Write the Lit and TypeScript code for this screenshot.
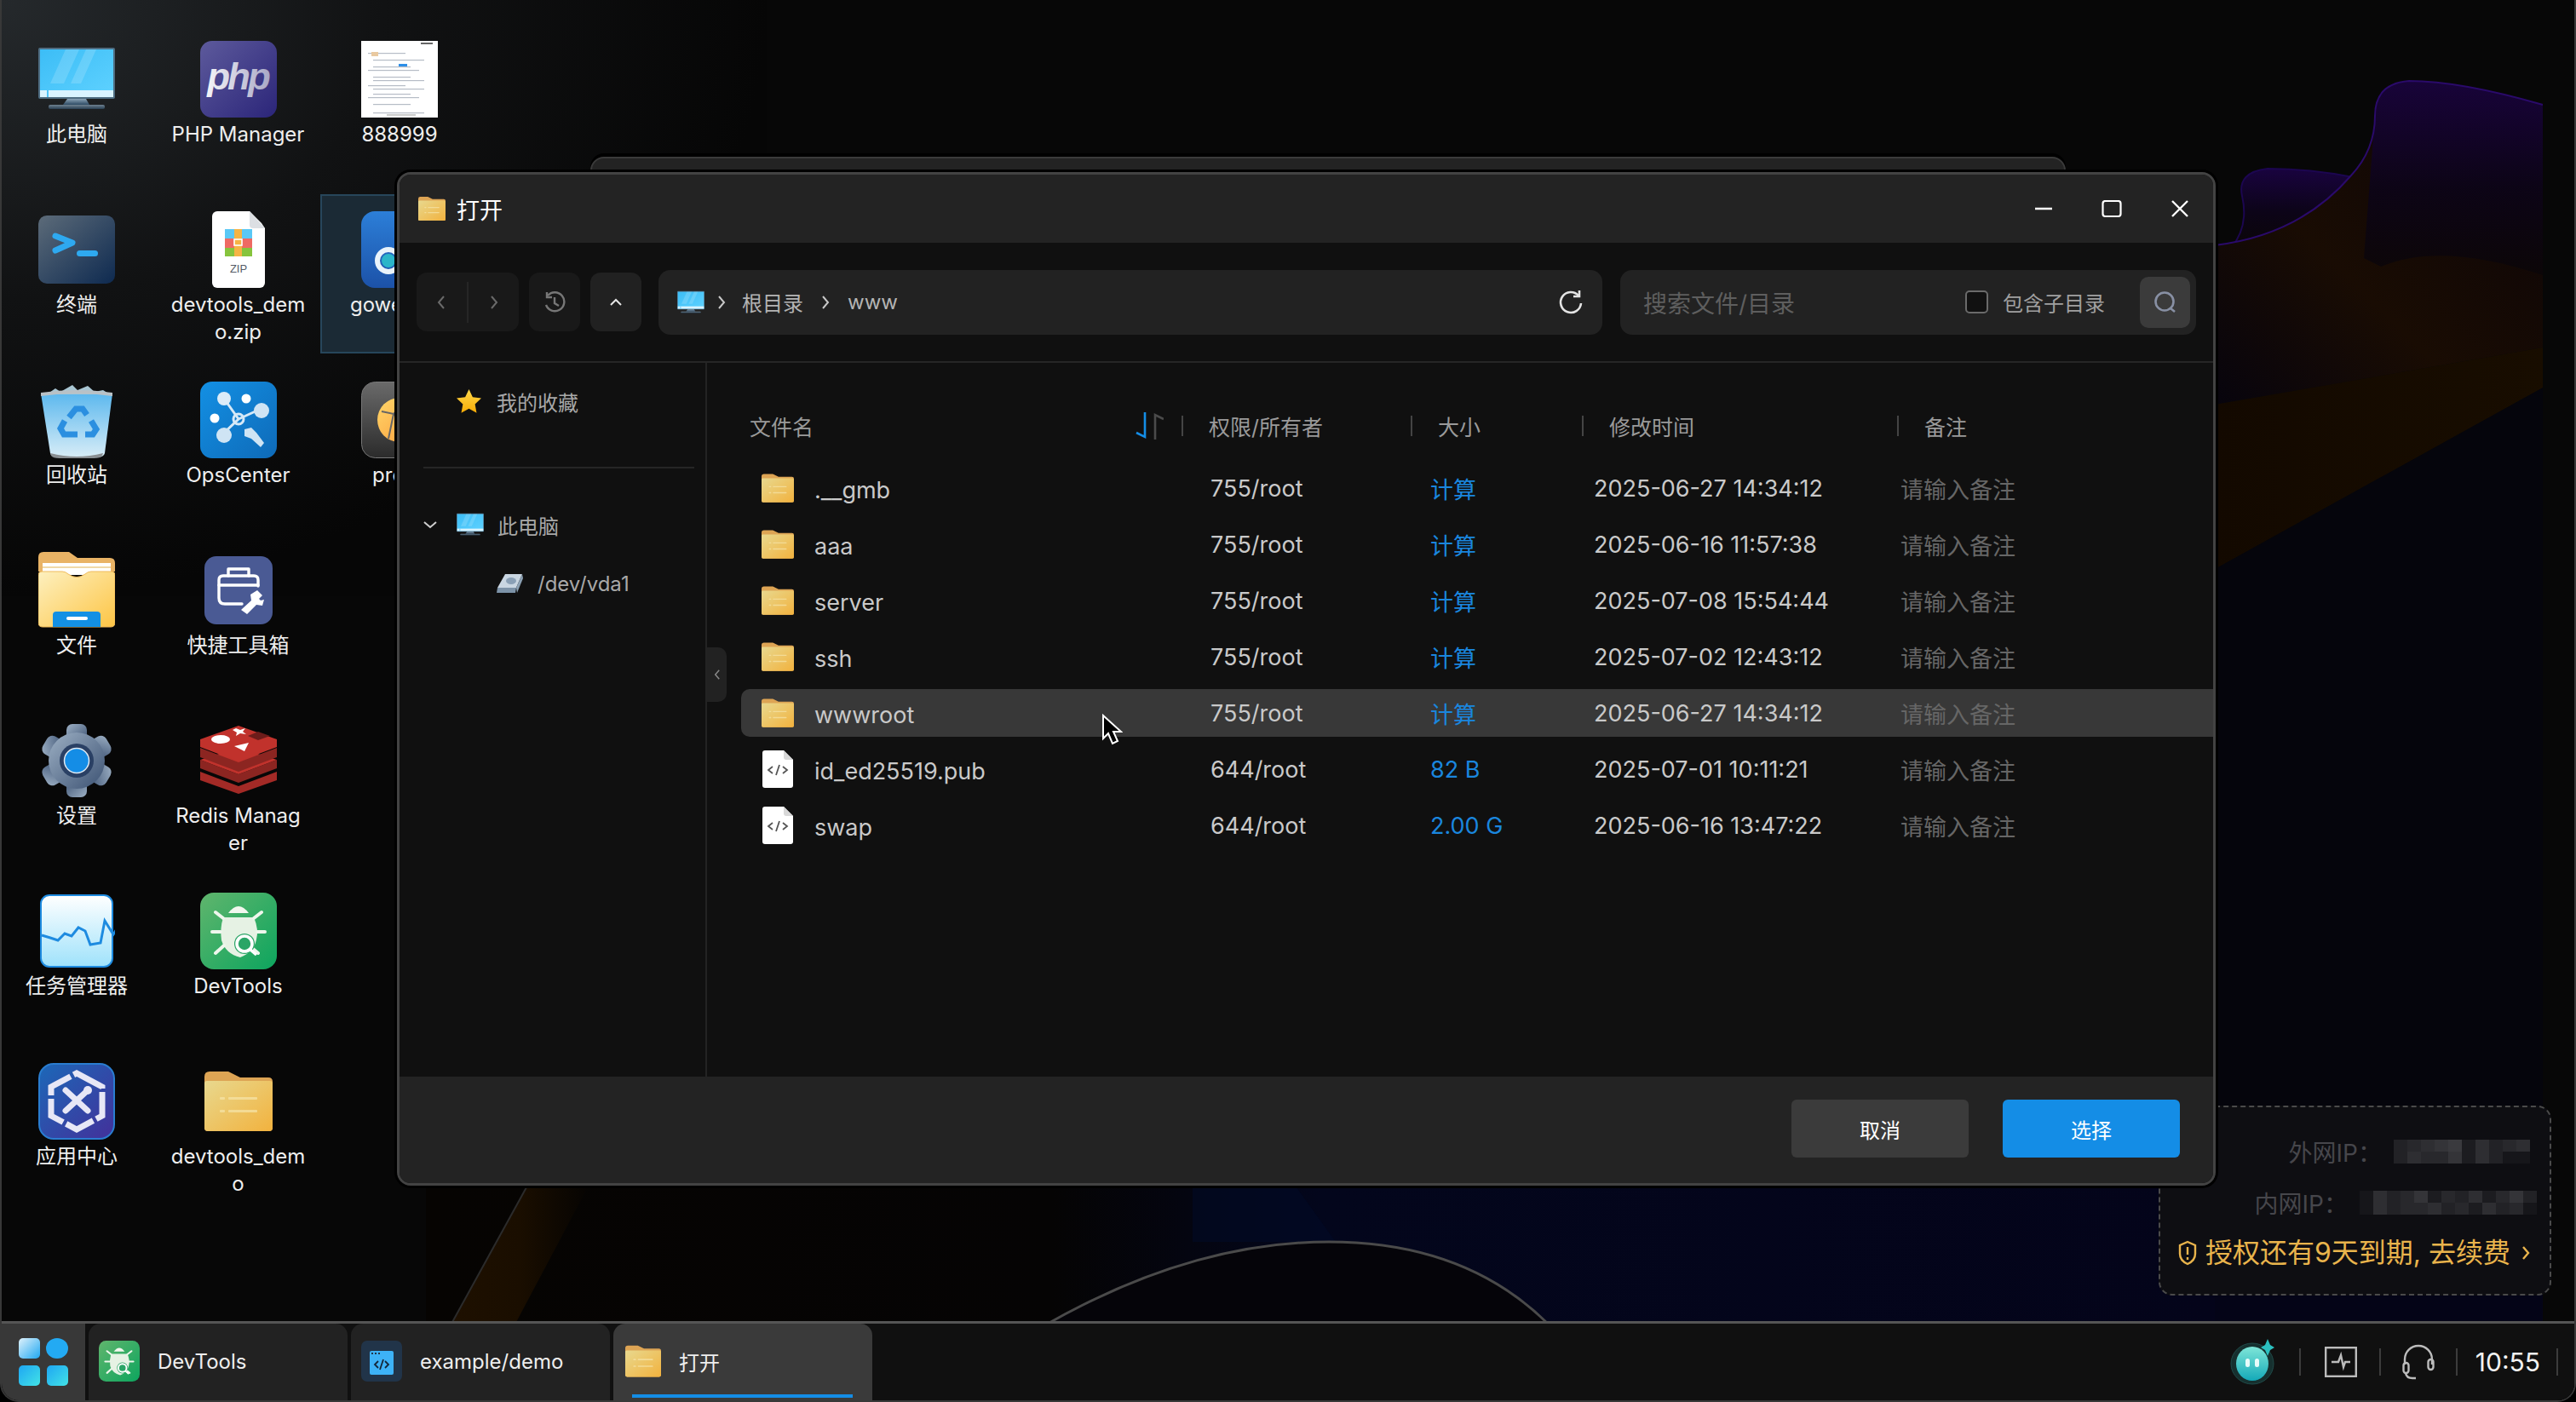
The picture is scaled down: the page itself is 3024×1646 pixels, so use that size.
import { LitElement, css, html, svg } from 'lit'
import { customElement } from 'lit/decorators.js'

// shared gradients live in the wallpaper svg, every icon points at them
const defs = svg`
  <defs>
    <linearGradient id="wpPurple" x1="0" y1="0" x2="0" y2="1"><stop offset="0" stop-color="#19033f"/><stop offset=".55" stop-color="#0c0418"/><stop offset="1" stop-color="#0b0608"/></linearGradient>
    <linearGradient id="wpOrange" x1="0" y1="0" x2="1" y2="0"><stop offset="0" stop-color="#130900"/><stop offset="1" stop-color="#180d00"/></linearGradient>
    <linearGradient id="wpFold" x1="1" y1="0" x2="0" y2="1"><stop offset="0" stop-color="#0b0408"/><stop offset=".6" stop-color="#190c03"/><stop offset="1" stop-color="#07040d"/></linearGradient>
    <linearGradient id="wpBand" x1="0" y1="0" x2="1" y2="0"><stop offset="0" stop-color="#1e1000"/><stop offset=".5" stop-color="#1a0e00"/><stop offset="1" stop-color="#060402"/></linearGradient>
    <linearGradient id="wpFloor" x1="0" y1="0" x2="1" y2="0"><stop offset="0" stop-color="#060402"/><stop offset=".35" stop-color="#050404"/><stop offset=".5" stop-color="#03061c"/><stop offset="1" stop-color="#04041a"/></linearGradient>
    <radialGradient id="wpCorner" cx="0" cy="0" r="1"><stop offset="0" stop-color="#25292c"/><stop offset=".5" stop-color="#111213"/><stop offset="1" stop-color="#060606"/></radialGradient>
    <linearGradient id="gPhp" x1="0" y1="0" x2="1" y2="1"><stop offset="0" stop-color="#5d5a9c"/><stop offset="1" stop-color="#2b2579"/></linearGradient>
    <linearGradient id="gPhpT" x1="0" y1="0" x2="1" y2="0"><stop offset="0" stop-color="#f4f4f8"/><stop offset="1" stop-color="#a9a8c6"/></linearGradient>
    <linearGradient id="gScreen" x1="0" y1="0" x2="1" y2="1"><stop offset="0" stop-color="#3cbdf6"/><stop offset="1" stop-color="#5fd2ff"/></linearGradient>
    <linearGradient id="gStand" x1="0" y1="0" x2="0" y2="1"><stop offset="0" stop-color="#8ba3b6"/><stop offset="1" stop-color="#2d4a63"/></linearGradient>
    <linearGradient id="gTerm" x1="0" y1="0" x2="1" y2="1"><stop offset="0" stop-color="#5c6b79"/><stop offset="1" stop-color="#0e2a50"/></linearGradient>
    <linearGradient id="gGowe" x1="0" y1="0" x2="0" y2="1"><stop offset="0" stop-color="#2c7fd8"/><stop offset="1" stop-color="#1c52a8"/></linearGradient>
    <linearGradient id="gPro" x1="0" y1="0" x2="0" y2="1"><stop offset="0" stop-color="#6a6a6a"/><stop offset="1" stop-color="#2b2b2b"/></linearGradient>
    <linearGradient id="gOrange" x1="0" y1="0" x2="1" y2="1"><stop offset="0" stop-color="#ffd76a"/><stop offset="1" stop-color="#fb9a3a"/></linearGradient>
    <linearGradient id="gBin" x1="0" y1="0" x2="0" y2="1"><stop offset="0" stop-color="#5cb8ee"/><stop offset="1" stop-color="#d8edf7"/></linearGradient>
    <linearGradient id="gOps" x1="0" y1="0" x2="1" y2="1"><stop offset="0" stop-color="#1390e4"/><stop offset="1" stop-color="#0e6ab8"/></linearGradient>
    <linearGradient id="gOpen" x1="0" y1="0" x2="1" y2="1"><stop offset="0" stop-color="#fdf0bf"/><stop offset="1" stop-color="#fdc545"/></linearGradient>
    <linearGradient id="gGear" x1="0" y1="0" x2="1" y2="1"><stop offset="0" stop-color="#9db0c4"/><stop offset="1" stop-color="#3c5273"/></linearGradient>
    <linearGradient id="gTask" x1="0" y1="0" x2="0" y2="1"><stop offset="0" stop-color="#ffffff"/><stop offset="1" stop-color="#9fe2fb"/></linearGradient>
    <linearGradient id="gDev" x1="0" y1="0" x2="1" y2="1"><stop offset="0" stop-color="#60b56d"/><stop offset="1" stop-color="#0da55e"/></linearGradient>
    <linearGradient id="gApp" x1="0" y1="0" x2="1" y2="1"><stop offset="0" stop-color="#1c68b8"/><stop offset="1" stop-color="#43309a"/></linearGradient>
    <linearGradient id="gFolder" x1="0" y1="0" x2="1" y2="1"><stop offset="0" stop-color="#e8d88e"/><stop offset="1" stop-color="#f2b23e"/></linearGradient>
    <linearGradient id="gStart" x1="0" y1="0" x2="1" y2="1"><stop offset="0" stop-color="#dff1fb"/><stop offset="1" stop-color="#1fa8f2"/></linearGradient>
    <linearGradient id="gStart2" x1="0" y1="0" x2="1" y2="1"><stop offset="0" stop-color="#1ea6f3"/><stop offset="1" stop-color="#42e3e6"/></linearGradient>
    <linearGradient id="gBot" x1="0" y1="0" x2="0" y2="1"><stop offset="0" stop-color="#7fe6d8"/><stop offset="1" stop-color="#14a9b8"/></linearGradient>
    <linearGradient id="gStar" x1="0" y1="0" x2="0" y2="1"><stop offset="0" stop-color="#ffd84a"/><stop offset="1" stop-color="#f7ab05"/></linearGradient>
  </defs>
`

const monitor = svg`
  <rect x="0" y="8" width="90" height="60" rx="2" fill="#4f6d82"/>
  <rect x="2" y="10" width="86" height="56" fill="url(#gScreen)"/>
  <path d="M32 10h16L30 50H14zM56 10h12L50 50H38z" fill="#fff" opacity=".16"/>
  <rect x="2" y="58" width="86" height="8" fill="#d9f3ff"/><rect x="10" y="58" width="2" height="8" fill="#4fc3f7"/>
  <path d="M34 68h22l4 7H29z" fill="url(#gStand)"/>
  <rect x="12" y="75" width="66" height="5" rx="2" fill="url(#gStand)" opacity=".75"/>
`
const phpIcon = svg`
  <rect width="90" height="90" rx="14" fill="url(#gPhp)"/>
  <text x="44" y="57" text-anchor="middle" font-family="Liberation Sans" font-size="44" font-weight="700" font-style="italic" letter-spacing="-3" fill="url(#gPhpT)">php</text>
`
const thumbLines = [14, 22, 30, 34, 42, 46, 52, 56, 62, 66, 74, 84]
const thumb = svg`
  <rect width="90" height="90" fill="#fff"/>
  ${thumbLines.map((y, i) => svg`<rect x=${i % 3 === 0 ? 8 : 14} y=${y} width=${i % 2 ? 60 : 44} height="1.2" fill="#b6bcc6"/>`)}
  <rect x="44" y="27" width="10" height="3" fill="#2d8fe8"/><rect x="70" y="2" width="14" height="2" fill="#666"/><rect x="12" y="13" width="8" height="5" fill="#e9c9a0"/>
  <rect x="30" y="86" width="34" height="2" fill="#ccc"/>
`
const terminal = svg`
  <rect x="0" y="0" width="90" height="80" rx="10" transform="translate(0 5)" fill="url(#gTerm)"/>
  <path d="M20 29l20 8-20 9" fill="none" stroke="#2ea9f0" stroke-width="7" stroke-linecap="round" stroke-linejoin="round"/>
  <rect x="45" y="46" width="25" height="7" rx="3.5" fill="#2ea9f0"/>
`
const zip = svg`
  <path d="M20 0h38l14 14 4 6v64a6 6 0 0 1-6 6H20a6 6 0 0 1-6-6V6a6 6 0 0 1 6-6z" fill="#fff"/>
  <path d="M58 0l18 20H62a4 4 0 0 1-4-4z" fill="#dcdfe3"/>
  <rect x="29" y="21" width="32" height="11" fill="#5ac8f5"/><rect x="29" y="32" width="32" height="11" fill="#ee6a63"/><rect x="29" y="43" width="32" height="10" fill="#86c43d"/>
  <rect x="40" y="21" width="9" height="32" fill="#f5b445"/><rect x="40" y="33" width="9" height="7" fill="none" stroke="#fff" stroke-width="1.6"/>
  <text x="45" y="72" text-anchor="middle" font-family="Liberation Sans" font-size="13" fill="#555b66">ZIP</text>
`
const gowe = svg`
  <rect width="90" height="90" rx="16" fill="url(#gGowe)"/>
  <path d="M58 18a9 9 0 1 1 0 18l-14 14" fill="none" stroke="#45c9cf" stroke-width="8"/>
  <circle cx="32" cy="58" r="13" fill="none" stroke="#e9f3fb" stroke-width="6"/><circle cx="32" cy="58" r="8" fill="#2bb5c9"/>
`
const pro = svg`
  <rect x=".5" y=".5" width="89" height="89" rx="16" fill="url(#gPro)" stroke="#777"/>
  <circle cx="45" cy="45" r="26" fill="url(#gOrange)"/>
  <path d="M24 35l14 3 16-16M38 38l-6 29M38 38l28 14" fill="none" stroke="#666" stroke-width="2"/>
`
const recycle = svg`
  <path d="M3 14h84l-9 70q-1 5-10 5H24q-9 0-10-5z" fill="url(#gBin)"/>
  <path d="M10 15l10-7 6 4 14-8 6 6 12-5 8 7 10-2 8 5z" fill="#a9c6d3"/>
  <path d="M3 13q42-6 84 0v4q-42-6-84 0z" fill="#b9c1c6"/>
  <path d="M14 84q31 8 62 0l-1 3q-2 3-10 3H25q-8 0-10-3z" fill="#8a8f93"/>
  <g fill="none" stroke="#2b8fe0" stroke-width="7">
    <path d="M36 42l8-10h8l5 7"/><path d="M62 46l6 10-4 6h-9"/><path d="M46 62H30l-4-7 5-9"/>
  </g>
`
const ops = svg`
  <rect width="90" height="90" rx="14" fill="url(#gOps)"/>
  <g stroke="#d6e9f7" stroke-width="3" fill="none"><path d="M28 20l17 24-19 18M45 44l24-11"/><circle cx="45" cy="44" r="6"/></g>
  <circle cx="28" cy="20" r="8" fill="#dcecf8"/><circle cx="54" cy="20" r="5.5" fill="#fff"/><circle cx="17" cy="43" r="5.5" fill="#fff"/>
  <circle cx="72" cy="34" r="9" fill="#cfe4f4"/><circle cx="28" cy="63" r="9" fill="#cfe4f4"/>
  <path d="M52 56l8-2 6 6 9 12-4 5-11-10-8-3z" fill="#cfe4f4"/>
`
const openFolder = svg`
  <path d="M0 6q0-6 6-6h30l10 7h38q6 0 6 6v10H0z" fill="#e9b365"/>
  <rect x="5" y="13" width="80" height="14" fill="#fff"/><rect x="5" y="17" width="80" height="2" fill="#f0d9a8"/>
  <path d="M0 27q0-4 4-4h24q4 0 7 3 10 7 20 0 3-3 7-3h24q4 0 4 4v56q0 5-5 5H5q-5 0-5-5z" fill="url(#gOpen)" stroke="#f0bb5a"/>
  <path d="M17 88V74q0-4 4-4h48q4 0 4 4v14z" fill="#1390e4"/><rect x="33" y="76" width="25" height="4" rx="2" fill="#fff"/>
`
const toolbox = svg`
  <rect width="80" height="80" rx="14" fill="#4a5a94"/>
  <g fill="none" stroke="#fff" stroke-width="3.4" stroke-linejoin="round" stroke-linecap="round">
    <path d="M28 23v-8h24v8"/><path d="M44 56H24q-7 0-7-7V28q0-5 5-5h36q5 0 5 5v7"/><path d="M17 34h46"/>
  </g>
  <path d="M62 40l6 6-4 4 2 2 4-1-2 7-7-1-11 11-7-5 12-11-1-7z" fill="#fff"/>
`
const gear = svg`
  <g fill="url(#gGear)">
    ${[0, 60, 120, 180, 240, 300].map((a) => svg`<rect x="33" y="2" width="24" height="22" rx="7" transform="rotate(${a} 45 45)"/>`)}
    <circle cx="45" cy="45" r="33"/>
  </g>
  <circle cx="45" cy="45" r="20" fill="#2a4064"/><circle cx="45" cy="45" r="14.5" fill="#148de6" stroke="#dfe9f2" stroke-width="1.5"/>
`
const redis = svg`
  <path d="M0 58l45 17 45-17v10L45 84 0 68z" fill="#a32a26"/><path d="M0 44l45 17 45-17v10L45 71 0 54z" fill="#8c2521"/>
  <path d="M0 44l45-14 45 14-45 17z" fill="#c1322c"/><path d="M0 30l45 17 45-17v11L45 58 0 41z" fill="#8c2521"/>
  <path d="M0 20L45 4l45 16v9L45 46 0 29z" fill="#c1322c"/>
  <ellipse cx="24" cy="20" rx="11" ry="5" fill="#fff"/><path d="M42 7l5 2 6-2-3 4 4 3-7-1-5 3 1-4-5-3z" fill="#fff"/><path d="M40 28l17-4-5 10z" fill="#fff"/>
  <path d="M56 16l12-5 14 5-14 5z" fill="#6d1c1a"/>
`
const taskMgr = svg`
  <rect x="3" y="3" width="84" height="84" rx="10" fill="url(#gTask)" stroke="#1e8be0" stroke-width="2"/>
  <path d="M4 50l10 3 9 3 8-8 8 3 8-10 8 4 6 16 12-2 5-26 10 16 4-6 3 6h4" fill="none" stroke="#1e8be0" stroke-width="3"/>
`
const devtools = svg`
  <rect width="90" height="90" rx="16" fill="url(#gDev)"/>
  <path d="M33 24q12-16 24 0z" fill="#f2f7ee"/>
  <path d="M27 29h36q6 14 3 26-3 15-19 21-17-4-22-20-2-14 2-27z" fill="#e6f2e4"/>
  <g fill="none" stroke="#eef6ec" stroke-width="4" stroke-linecap="round"><path d="M27 30L18 23M63 30l9-7M24 46H14M67 46h9M28 62l-10 9M62 66l6 5"/></g>
  <circle cx="52" cy="60" r="12" fill="#2aa566"/><circle cx="52" cy="60" r="9" fill="none" stroke="#fff" stroke-width="3.6"/><path d="M59 67l7 6" stroke="#fff" stroke-width="3.6"/>
`
const appCenter = svg`
  <rect x="1" y="1" width="88" height="88" rx="17" fill="url(#gApp)" stroke="#2a7dd0" stroke-width="2"/>
  <path d="M45 12l30 16v34L45 78 15 62V28z" fill="none" stroke="#e7e7f6" stroke-width="7" stroke-dasharray="36 4"/>
  <path d="M32 32l26 24M58 32L32 56" stroke="#e7e7f6" stroke-width="7" stroke-linecap="round"/>
  <circle cx="58" cy="32" r="5" fill="#e7e7f6"/>
`
const folder = svg`
  <path d="M0 6q0-6 6-6h22l14 7h33q5 0 5 5v54q0 4-4 4H4q-4 0-4-4z" fill="#dda454"/>
  <path d="M0 14q0-3 3-3h74q3 0 3 3v52q0 4-4 4H4q-4 0-4-4z" fill="url(#gFolder)"/>
  <g fill="#f6e3a6" opacity=".75"><rect x="18" y="30" width="6" height="3" rx="1"/><rect x="28" y="30" width="34" height="3" rx="1"/><rect x="18" y="45" width="6" height="3" rx="1"/><rect x="28" y="45" width="34" height="3" rx="1"/></g>
`
const codeFile = svg`
  <path d="M3 0h22l11 11v30a3 3 0 0 1-3 3H3a3 3 0 0 1-3-3V3a3 3 0 0 1 3-3z" fill="#fff"/>
  <path d="M25 0l11 11h-8a3 3 0 0 1-3-3z" fill="#d8d8d8"/>
  <path d="M12 19l-5 4 5 4M24 19l5 4-5 4M20 17l-4 12" fill="none" stroke="#555" stroke-width="1.8"/>
`
const codeApp = svg`
  <rect width="48" height="48" rx="7" fill="#213449"/>
  <rect x="10" y="12" width="28" height="28" rx="2" fill="#3db2f7"/>
  <g fill="#213449"><rect x="12" y="14" width="2" height="2"/><rect x="16" y="14" width="2" height="2"/><rect x="20" y="14" width="2" height="2"/></g>
  <path d="M20 24l-4 4 4 4M28 24l4 4-4 4M26 22l-4 12" fill="none" stroke="#14273a" stroke-width="1.8"/>
`

const icon = (art: unknown, w: number, h: number, vw = w, vh = h) =>
  html`<svg width=${w} height=${h} viewBox="0 0 ${vw} ${vh}" style="flex:none;display:block">${art}</svg>`

const chevron = (d: string, color: string, size = 16, width = 2) => html`
  <svg width=${size} height=${size} viewBox="0 0 16 16" style="flex:none;display:block">
    <path d=${d} fill="none" stroke=${color} stroke-width=${width}/>
  </svg>`

const RIGHT = 'M5 1l6 7-6 7'
const LEFT = 'M11 1L5 8l6 7'
const DOWN = 'M1 5l7 6 7-6'
const UP = 'M2 11l6-6 6 6'

interface DeskItem { name: string; art: unknown; sel?: boolean; w?: number; vw?: number; vh?: number; h?: number }

const desktop: DeskItem[] = [
  { name: '此电脑', art: monitor },
  { name: '终端', art: terminal },
  { name: '回收站', art: recycle },
  { name: '文件', art: openFolder },
  { name: '设置', art: gear },
  { name: '任务管理器', art: taskMgr },
  { name: '应用中心', art: appCenter },
  { name: 'PHP Manager', art: phpIcon },
  { name: 'devtools_demo.zip', art: zip },
  { name: 'OpsCenter', art: ops },
  { name: '快捷工具箱', art: toolbox, w: 80, h: 80, vw: 80, vh: 80 },
  { name: 'Redis Manager', art: redis },
  { name: 'DevTools', art: devtools },
  { name: 'devtools_demo', art: folder, w: 80, h: 70, vw: 80, vh: 70 },
  { name: '888999', art: thumb },
  { name: 'gowebssh', art: gowe, sel: true },
  { name: 'proxy', art: pro },
]

const rows = [
  { name: '.__gmb', dir: true, perm: '755/root', size: '计算', time: '2025-06-27 14:34:12' },
  { name: 'aaa', dir: true, perm: '755/root', size: '计算', time: '2025-06-16 11:57:38' },
  { name: 'server', dir: true, perm: '755/root', size: '计算', time: '2025-07-08 15:54:44' },
  { name: 'ssh', dir: true, perm: '755/root', size: '计算', time: '2025-07-02 12:43:12' },
  { name: 'wwwroot', dir: true, perm: '755/root', size: '计算', time: '2025-06-27 14:34:12', hover: true },
  { name: 'id_ed25519.pub', dir: false, perm: '644/root', size: '82 B', time: '2025-07-01 10:11:21' },
  { name: 'swap', dir: false, perm: '644/root', size: '2.00 G', time: '2025-06-16 13:47:22' },
]

// the blurred out ip addresses, one shade per mosaic cell
const mosaicA = [3, 4, 5, 6, 7, 2, 5, 3, 4, 5, 3, 5, 4, 4, 6, 2, 5, 3, 1, 1]
const mosaicB = [1, 5, 3, 4, 6, 2, 4, 3, 5, 2, 4, 6, 3, 1, 5, 3, 4, 4, 5, 3, 4, 2, 5, 3, 4, 1]

const mosaic = (cells: number[], perRow: number) => html`
  <span class="mosaic" style="grid-template-columns:repeat(${perRow},16px)">
    ${cells.map((c) => html`<i style="background:rgb(${16 + c * 6},${16 + c * 6},${20 + c * 6})"></i>`)}
  </span>`

@customElement('app-root')
export class AppRoot extends LitElement {
  static styles = css`
    :host {
      display: block;
      width: 3024px;
      height: 1646px;
      overflow: hidden;
      background: #000;
      font-family: Inter, "Noto Sans CJK SC", sans-serif;
    }
    .screen {
      position: relative;
      box-sizing: border-box;
      width: 3024px;
      height: 1646px;
      display: flex;
      flex-direction: column;
      overflow: hidden;
      background: #070707;
      border: 2px solid #383838;
      border-top: 0;
      border-radius: 0 0 22px 22px;
    }
    .wall { position: absolute; left: -2px; top: 0; }

    /* desktop icons */
    .desk {
      position: relative;
      flex: 1;
      display: grid;
      grid-auto-flow: column;
      grid-template-rows: repeat(7, 200px);
      grid-template-columns: repeat(3, 160px);
      column-gap: 29.5px;
      align-content: start;
      padding: 48px 0 0 8px;
    }
    .cell {
      position: relative;
      display: flex;
      flex-direction: column;
      align-items: center;
      isolation: isolate;
    }
    .cell.sel::before {
      content: "";
      position: absolute;
      z-index: -1;
      left: -13px;
      right: -13px;
      top: -20px;
      height: 187px;
      box-sizing: border-box;
      background: #1b2a35;
      border: 2px solid #27465b;
    }
    .art { height: 90px; display: flex; align-items: center; justify-content: center; }
    .label {
      margin-top: 4px;
      width: 160px;
      text-align: center;
      font-size: 24px;
      line-height: 32px;
      color: #eee;
      word-break: break-all;
    }

    /* free widget on the desktop */
    .info {
      position: absolute;
      left: 2532px;
      top: 1298px;
      width: 461px;
      height: 223px;
      box-sizing: border-box;
      background: #0e0e12;
      border: 2px dashed #4a4a4a;
      border-radius: 16px;
      font-size: 28px;
      color: #46464b;
    }
    .ip { position: absolute; display: flex; align-items: center; gap: 14px; white-space: nowrap; }
    .ip.a { right: 23px; top: 32px; }
    .ip.b { right: 15px; top: 92px; }
    .mosaic { display: grid; grid-auto-rows: 14px; }
    .mosaic i { display: block; height: 14px; }
    .warn {
      position: absolute;
      left: 21px;
      top: 151px;
      display: flex;
      align-items: center;
      gap: 10px;
      white-space: nowrap;
      font-size: 32px;
      line-height: 40px;
      color: #e9b44c;
    }

    /* windows */
    .back {
      position: absolute;
      left: 691px;
      top: 184px;
      width: 1728px;
      height: 40px;
      background: #232323;
      border: 2px solid #3a3a3a;
      border-radius: 16px 16px 0 0;
      box-shadow: 0 -4px 0 #000;
    }
    .win {
      position: absolute;
      left: 464px;
      top: 202px;
      width: 2135px;
      height: 1190px;
      box-sizing: border-box;
      display: flex;
      flex-direction: column;
      overflow: hidden;
      background: #101010;
      border: 3px solid #434343;
      border-radius: 16px;
      box-shadow: 0 0 0 3px #000;
    }
    .title {
      flex: none;
      height: 80px;
      display: flex;
      align-items: center;
      gap: 13px;
      padding: 0 19px 0 22px;
      background: #232323;
      color: #fff;
      font-size: 27px;
    }
    .controls { margin-left: auto; display: flex; gap: 40px; }
    .controls button {
      width: 40px;
      height: 40px;
      padding: 0;
      border: 0;
      background: none;
      display: flex;
      align-items: center;
      justify-content: center;
    }
    .tools {
      flex: none;
      box-sizing: border-box;
      height: 141px;
      display: flex;
      align-items: center;
      padding: 0 20px;
      border-bottom: 2px solid #262626;
    }
    .btn {
      flex: none;
      height: 69px;
      width: 60px;
      margin-right: 12px;
      border-radius: 12px;
      background: #191919;
      display: flex;
      align-items: center;
      justify-content: center;
    }
    .btn.nav { width: 120px; }
    .btn.nav b { width: 2px; height: 48px; margin: 0 22px; background: #262626; }
    .btn.up { background: #212121; margin-right: 20px; }
    .crumb {
      flex: 1;
      height: 76px;
      display: flex;
      align-items: center;
      padding: 0 22px;
      border-radius: 14px;
      background: #222;
      font-size: 24px;
      color: #b4b4b4;
    }
    .crumb .sp { margin-left: auto; }
    .search {
      flex: none;
      box-sizing: border-box;
      width: 676px;
      height: 76px;
      margin-left: 21px;
      padding: 0 7px 0 27px;
      display: flex;
      align-items: center;
      border-radius: 14px;
      background: #222;
    }
    .search .ph { font-size: 28px; color: #5e5e5e; }
    .check {
      margin-left: auto;
      width: 27px;
      height: 27px;
      box-sizing: border-box;
      border: 2px solid #6a6a6a;
      border-radius: 5px;
      background: #111;
    }
    .search .lbl { margin-left: 17px; font-size: 24px; color: #a0a0a0; }
    .go {
      margin-left: 41px;
      width: 59px;
      height: 60px;
      border-radius: 10px;
      background: #3b3b3b;
      display: flex;
      align-items: center;
      justify-content: center;
    }

    .body { flex: 1; display: flex; min-height: 0; }
    .side {
      flex: none;
      width: 359px;
      box-sizing: content-box;
      padding-top: 20px;
      border-right: 2px solid #232323;
      font-size: 24px;
      color: #a8a8a8;
    }
    .tree { height: 50px; display: flex; align-items: center; }
    .tree.fav { padding-left: 67px; gap: 18px; }
    .tree.pc { margin-top: 41px; padding-left: 28px; }
    .tree.pc .pcicon { margin: 0 16px 0 23px; }
    .tree.disk { margin-top: 19px; padding-left: 114px; gap: 16px; }
    .rule { height: 2px; margin: 52px 13px 0 28px; background: #262626; }

    .main { position: relative; flex: 1; min-width: 0; }
    .handle {
      position: absolute;
      left: 0;
      top: 334px;
      width: 23px;
      height: 64px;
      border-radius: 0 10px 10px 0;
      background: #222;
      display: flex;
      align-items: center;
      justify-content: center;
    }
    .head {
      display: grid;
      grid-template-columns: 507px 269px 201px 370px 1fr;
      height: 48px;
      margin: 50px 0 21px 50px;
      font-size: 25px;
      color: #9a9a9a;
    }
    .head > div { display: flex; align-items: center; }
    .head .sepd::before {
      content: "";
      width: 2px;
      height: 24px;
      margin-right: 30px;
      background: #444;
    }
    .head .first { justify-content: space-between; padding-right: 21px; }
    .list { display: flex; flex-direction: column; gap: 10px; margin-left: 40px; }
    .row {
      height: 56px;
      display: grid;
      grid-template-columns: 527px 258px 192px 360px 1fr;
      align-items: center;
      padding-left: 24px;
      border-radius: 10px 0 0 10px;
      font-size: 27px;
      color: #c9c9c9;
    }
    .row.hover { background: #383838; }
    .name { display: flex; align-items: center; gap: 24px; }
    .name .txt { padding-top: 5px; }
    .name .ico { width: 38px; display: flex; justify-content: center; }
    .link { color: #1a86de; }
    .note { color: #666; }
    .pointer { position: absolute; left: 1290px; top: 838px; z-index: 3; }

    .foot {
      flex: none;
      height: 125px;
      box-sizing: border-box;
      display: flex;
      justify-content: flex-end;
      gap: 40px;
      padding: 27px 39px 0 0;
      background: #232323;
    }
    .foot button {
      width: 208px;
      height: 68px;
      border: 0;
      border-radius: 6px;
      font: inherit;
      font-size: 24px;
      color: #fff;
      background: #3b3b3b;
    }
    .foot button.ok { background: #148de6; }

    /* taskbar */
    .bar {
      position: relative;
      flex: none;
      height: 90px;
      display: flex;
      border-top: 3px solid #555;
      background: #101010;
      font-size: 24px;
      color: #eee;
    }
    .start {
      flex: none;
      width: 98px;
      background: #383838;
      display: flex;
      align-items: center;
      justify-content: center;
    }
    .task {
      flex: none;
      position: relative;
      box-sizing: border-box;
      width: 304px;
      margin-left: 4px;
      display: flex;
      align-items: center;
      gap: 21px;
      padding: 0 0 2px 12px;
      border-radius: 14px 14px 0 0;
      background: #222;
    }
    .task.on { background: #3a3a3a; padding-left: 14px; }
    .task.on::after {
      content: "";
      position: absolute;
      left: 22px;
      width: 259px;
      bottom: 3px;
      height: 4px;
      background: #148de6;
    }
    .tray { margin-left: auto; display: flex; align-items: center; padding-right: 19px; }
    .tray i { width: 2px; height: 32px; background: #3c3c3c; }
    .clock { font-size: 30px; margin: 0 19px 0 21px; color: #f2f2f2; }
  `

  render() {
    return html`
      <div class="screen">
        <svg class="wall" width="3024" height="1646" viewBox="0 0 3024 1646">
          ${defs}
          <rect width="3024" height="1646" fill="#070707"/>
          <rect width="900" height="700" fill="url(#wpCorner)"/>
          <path d="M2400 1000L2985 455V1554H500V1394H2400z" fill="#04041a" opacity=".9"/>
          <path d="M2600 668L2985 455V1400H2600z" fill="#05050c"/>
          <path d="M2620 290q20-25 12-60-6-28 30-32 50 0 100 10l-40 76z" fill="url(#wpPurple)" stroke="#1c0650" stroke-width="2"/>
          <path d="M2600 288q100-12 160-82 28-30 28-70 0-38 40-41 60 0 157 28v285l-385 67z" fill="url(#wpFold)"/>
          <path d="M2788 136q0-38 40-41 60 0 157 28v200q-120-40-190-10l-20-10z" fill="url(#wpPurple)" opacity=".9"/>
          <path d="M2600 288q100-12 160-82 28-30 28-70 0-38 40-41 60 0 157 28" fill="none" stroke="#2a0a6a" stroke-width="2"/>
          <path d="M2600 475L2985 408v47L2600 668z" fill="url(#wpOrange)"/>
          <rect x="500" y="1394" width="2100" height="160" fill="url(#wpFloor)"/>
          <path d="M618 1394L530 1554H605L690 1394z" fill="url(#wpBand)"/>
          <path d="M618 1394L530 1554" stroke="#2b2b2b" stroke-width="2"/>
          <path d="M1522 1394L1568 1458H1400V1394z" fill="#020a26" opacity=".6"/>
          <path d="M1230 1554Q1400 1458 1560 1458T1817 1554z" fill="#050409"/>
          <path d="M1230 1554Q1400 1458 1560 1458T1817 1554" fill="none" stroke="#4a4a4a" stroke-width="3"/>
          <rect x="2985" width="40" height="1646" fill="#070707"/>
        </svg>

        <div class="desk">
          ${desktop.map((d) => html`
            <div class="cell ${d.sel ? 'sel' : ''}">
              <div class="art">${icon(d.art, d.w ?? 90, d.h ?? 90, d.vw ?? 90, d.vh ?? 90)}</div>
              <div class="label">${d.name}</div>
            </div>`)}
          ${this.renderInfo()}
          <div class="back"></div>
          ${this.renderWindow()}
          <svg class="pointer" width="26" height="38" viewBox="0 0 26 38">
            <path d="M3 2v27l6-6 5 12 6-3-5-11h9z" fill="#000" stroke="#fff" stroke-width="2"/>
          </svg>
        </div>
        ${this.renderBar()}
      </div>
    `
  }

  renderInfo() {
    return html`
      <div class="info">
        <div class="ip a">外网IP： ${mosaic(mosaicA, 10)}</div>
        <div class="ip b">内网IP： ${mosaic(mosaicB, 13)}</div>
        <div class="warn">
          <svg width="22" height="30" viewBox="0 0 22 30" fill="none" stroke="#e9b44c" stroke-width="2.4">
            <path d="M11 2l9 4v10q0 8-9 12Q2 24 2 16V6z"/><path d="M11 8v9M11 20v3"/>
          </svg>
          <span>授权还有9天到期, 去续费</span>
          ${chevron(RIGHT, '#e9b44c', 16, 2.4)}
        </div>
      </div>
    `
  }

  renderWindow() {
    return html`
      <div class="win">
        <div class="title">
          ${icon(folder, 32, 28, 80, 70)}
          <span>打开</span>
          <div class="controls">
            <button><svg width="20" height="20" viewBox="0 0 20 20"><path d="M0 10h20" stroke="#fff" stroke-width="2.4"/></svg></button>
            <button><svg width="24" height="20" viewBox="0 0 24 20"><rect x="1.5" y="1" width="21" height="18" rx="3" fill="none" stroke="#fff" stroke-width="2.2"/></svg></button>
            <button><svg width="20" height="20" viewBox="0 0 20 20"><path d="M1 1l18 18M19 1L1 19" stroke="#fff" stroke-width="2.4"/></svg></button>
          </div>
        </div>
        <div class="tools">
          <div class="btn nav">${chevron(LEFT, '#6a6a6a')}<b></b>${chevron(RIGHT, '#6a6a6a')}</div>
          <div class="btn">
            <svg width="26" height="28" viewBox="0 0 26 28" fill="none" stroke="#777" stroke-width="2.4">
              <path d="M5 6a11 11 0 1 1-2 11"/><path d="M4 2v6h6"/><path d="M13 8v7l5 3"/>
            </svg>
          </div>
          <div class="btn up">${chevron(UP, '#e6e6e6')}</div>
          <div class="crumb">
            ${icon(monitor, 32, 32, 90, 90)}
            <span style="width:12px"></span>${chevron(RIGHT, '#c8c8c8')}
            <span style="width:16px"></span><span>根目录</span>
            <span style="width:18px"></span>${chevron(RIGHT, '#c8c8c8')}
            <span style="width:18px"></span><span>www</span>
            <span class="sp"></span>
            <svg width="30" height="30" viewBox="0 0 30 30" fill="none" stroke="#e4e4e4" stroke-width="2.6">
              <path d="M24 7a12 12 0 1 0 3 9"/><path d="M25 1v7h-7"/>
            </svg>
          </div>
          <div class="search">
            <span class="ph">搜索文件/目录</span>
            <span class="check"></span>
            <span class="lbl">包含子目录</span>
            <div class="go">
              <svg width="28" height="28" viewBox="0 0 28 28" fill="none" stroke="#8890a4" stroke-width="2.6">
                <circle cx="13" cy="13" r="10.5"/><path d="M20 21l5 4"/>
              </svg>
            </div>
          </div>
        </div>
        <div class="body">
          <div class="side">
            <div class="tree fav">
              <svg width="29" height="28" viewBox="0 0 29 28" style="flex:none"><path d="M14.5 0l4.4 9.3 10.1 1.3-7.4 7 1.9 10.2-9-5-9 5 1.9-10.2-7.4-7 10.1-1.3z" fill="url(#gStar)"/></svg>
              <span>我的收藏</span>
            </div>
            <div class="rule"></div>
            <div class="tree pc">
              ${chevron(DOWN, '#cfcfcf')}
              <span class="pcicon">${icon(monitor, 32, 32, 90, 90)}</span>
              <span>此电脑</span>
            </div>
            <div class="tree disk">
              <svg width="32" height="24" viewBox="0 0 32 24" style="flex:none">
                <path d="M10 1h20L23 17H1z" fill="#c9d6e2"/><path d="M1 17h22l-1 6H0z" fill="#7d93a8"/><path d="M23 17l7-16 1 5-7 17z" fill="#8ba0b3"/>
                <ellipse cx="17" cy="9" rx="6" ry="4" fill="#8aa0b6"/>
              </svg>
              <span>/dev/vda1</span>
            </div>
          </div>
          <div class="main">
            <div class="handle">${chevron(LEFT, '#888', 12, 2)}</div>
            <div class="head">
              <div class="first">
                <span>文件名</span>
                <svg width="33" height="32" viewBox="0 0 33 32" fill="none" stroke-width="2.6">
                  <path d="M11 0v29l-10-5" stroke="#148de6" fill="none"/><path d="M23 32V3l10 5" stroke="#4a4a4a"/>
                </svg>
              </div>
              <div class="sepd">权限/所有者</div>
              <div class="sepd">大小</div>
              <div class="sepd">修改时间</div>
              <div class="sepd">备注</div>
            </div>
            <div class="list">
              ${rows.map((r) => html`
                <div class="row ${r.hover ? 'hover' : ''}">
                  <div class="name">
                    <span class="ico">${r.dir ? icon(folder, 38, 34, 80, 70) : icon(codeFile, 36, 44)}</span>
                    <span class="txt">${r.name}</span>
                  </div>
                  <div>${r.perm}</div>
                  <div class="link">${r.size}</div>
                  <div>${r.time}</div>
                  <div class="note">请输入备注</div>
                </div>`)}
            </div>
          </div>
        </div>
        <div class="foot">
          <button>取消</button>
          <button class="ok">选择</button>
        </div>
      </div>
    `
  }

  renderBar() {
    return html`
      <div class="bar">
        <div class="start">
          <svg width="58" height="56" viewBox="0 0 58 56">
            <rect x="0" y="0" width="25" height="24" rx="5" fill="url(#gStart)"/>
            <ellipse cx="45" cy="12" rx="13" ry="12" fill="#23aaf3"/>
            <rect x="0" y="32" width="25" height="24" rx="5" fill="url(#gStart2)"/>
            <rect x="33" y="32" width="25" height="24" rx="5" fill="url(#gStart2)"/>
          </svg>
        </div>
        <div class="task">${icon(devtools, 48, 48, 90, 90)}<span>DevTools</span></div>
        <div class="task">${icon(codeApp, 48, 48)}<span>example/demo</span></div>
        <div class="task on">${icon(folder, 42, 38, 80, 70)}<span>打开</span></div>
        <div class="tray">
          <svg width="53" height="54" viewBox="0 0 53 54" style="margin-right:28px">
            <ellipse cx="26" cy="29" rx="25" ry="24" fill="#16302f" stroke="#1f4a48"/>
            <ellipse cx="26" cy="29" rx="19" ry="20" fill="url(#gBot)"/>
            <rect x="18" y="23" width="5" height="10" rx="2.5" fill="#e8fbfa"/><rect x="29" y="23" width="5" height="10" rx="2.5" fill="#e8fbfa"/>
            <path d="M44 0l3 7 5 3-5 3-3 7-3-7-5-3 5-3z" fill="#2cc0c0"/>
          </svg>
          <i></i>
          <svg width="38" height="36" viewBox="0 0 38 36" style="margin:0 26px 0 28px" fill="none" stroke="#bcbcbc" stroke-width="2.4">
            <rect x="1.2" y="1.2" width="35.6" height="33.6"/><path d="M8 18h8l3-8 3 14 2-6h6"/>
          </svg>
          <i></i>
          <svg width="38" height="42" viewBox="0 0 38 42" style="margin:0 25px 0 25px" fill="none" stroke="#bcbcbc" stroke-width="2.4">
            <path d="M3 24V18a16 16 0 0 1 32 0v6"/><rect x="1.5" y="22" width="6" height="12" rx="3"/><rect x="30.5" y="18" width="6" height="12" rx="3"/><path d="M4 34q1 6 8 6h4"/>
          </svg>
          <i></i>
          <span class="clock">10:55</span>
          <i></i>
        </div>
      </div>
    `
  }
}
